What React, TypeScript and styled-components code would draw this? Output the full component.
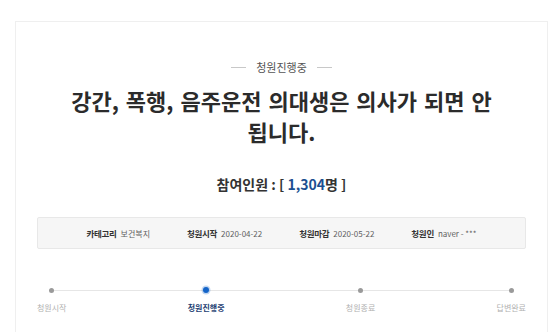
import React from "react";
import styled, { createGlobalStyle } from "styled-components";

const Global = createGlobalStyle`
  html, body { margin: 0; padding: 0; background: #ffffff; overflow: hidden; }
  body { font-family: "Noto Sans CJK KR", "Noto Sans", sans-serif; }
  * { box-sizing: border-box; }
`;

const Page = styled.div`
  padding: 21px 10px 0 15px;
`;

const Card = styled.section`
  border: 1px solid #efefef;
  border-bottom: none;
  padding: 37px 21px 18px 21px;
  display: flex;
  flex-direction: column;
  align-items: center;
`;

const Status = styled.div`
  display: flex;
  align-items: center;
  gap: 10px;
  font-size: 11px;
  line-height: 16px;
  color: #555;
  &::before, &::after {
    content: "";
    width: 15px;
    height: 1px;
    background: #c8c8c8;
  }
`;

const Title = styled.h1`
  margin: 10px 0 0;
  max-width: 450px;
  text-align: center;
  word-break: keep-all;
  font-size: 22px;
  word-spacing: 2px;
  line-height: 31px;
  font-weight: 700;
  color: #2b2b2b;
`;

const Count = styled.div`
  margin-top: 27px;
  font-size: 14px;
  line-height: 20px;
  font-weight: 700;
  color: #333;
`;

const Num = styled.span`
  color: #1c4f91;
`;

const InfoBox = styled.div`
  margin-top: 23px;
  align-self: stretch;
  height: 32px;
  background: #f6f6f6;
  border: 1px solid #e8e8e8;
  border-radius: 2px;
  display: flex;
  justify-content: center;
  align-items: center;
  gap: 37px;
`;

const InfoItem = styled.div`
  display: flex;
  align-items: baseline;
  gap: 4px;
  font-size: 8px;
  line-height: 12px;
  color: #5f5f5f;
  white-space: nowrap;
`;

const InfoLabel = styled.span`
  font-weight: 700;
  font-size: 8.5px;
  color: #333;
  letter-spacing: -0.3px;
`;

const Steps = styled.div`
  margin-top: 37px;
  align-self: stretch;
  display: flex;
  justify-content: space-between;
  position: relative;
  &::before {
    content: "";
    position: absolute;
    left: 16px;
    right: 16px;
    top: 3.5px;
    height: 1px;
    background: #e6e6e6;
  }
`;

const Step = styled.div`
  display: flex;
  flex-direction: column;
  align-items: center;
  gap: 9px;
  position: relative;
`;

const Dot = styled.span<{ $active?: boolean }>`
  display: block;
  margin-top: ${(p) => (p.$active ? "1px" : "1.5px")};
  width: ${(p) => (p.$active ? "6px" : "5px")};
  height: ${(p) => (p.$active ? "6px" : "5px")};
  border-radius: 50%;
  background: ${(p) => (p.$active ? "#1464c8" : "#9a9a9a")};
  box-shadow: ${(p) => (p.$active ? "0 0 0 1.5px rgba(20,100,200,0.25)" : "none")};
`;

const StepLabel = styled.span<{ $active?: boolean }>`
  font-size: 8px;
  line-height: 12px;
  white-space: nowrap;
  font-weight: ${(p) => (p.$active ? 700 : 400)};
  color: ${(p) => (p.$active ? "#1e3f73" : "#b0b0b0")};
`;

const info = [
  ["카테고리", "보건복지"],
  ["청원시작", "2020-04-22"],
  ["청원마감", "2020-05-22"],
  ["청원인", "naver - ***"],
];

const steps = ["청원시작", "청원진행중", "청원종료", "답변완료"];

export default function App() {
  return (
    <>
      <Global />
      <Page>
        <Card>
          <Status>청원진행중</Status>
          <Title>강간, 폭행, 음주운전 의대생은 의사가 되면 안 됩니다.</Title>
          <Count>
            참여인원 : [ <Num>1,304</Num>명 ]
          </Count>
          <InfoBox>
            {info.map(([k, v]) => (
              <InfoItem key={k}>
                <InfoLabel>{k}</InfoLabel>
                <span>{v}</span>
              </InfoItem>
            ))}
          </InfoBox>
          <Steps>
            {steps.map((s, i) => (
              <Step key={s}>
                <Dot $active={i === 1} />
                <StepLabel $active={i === 1}>{s}</StepLabel>
              </Step>
            ))}
          </Steps>
        </Card>
      </Page>
    </>
  );
}
